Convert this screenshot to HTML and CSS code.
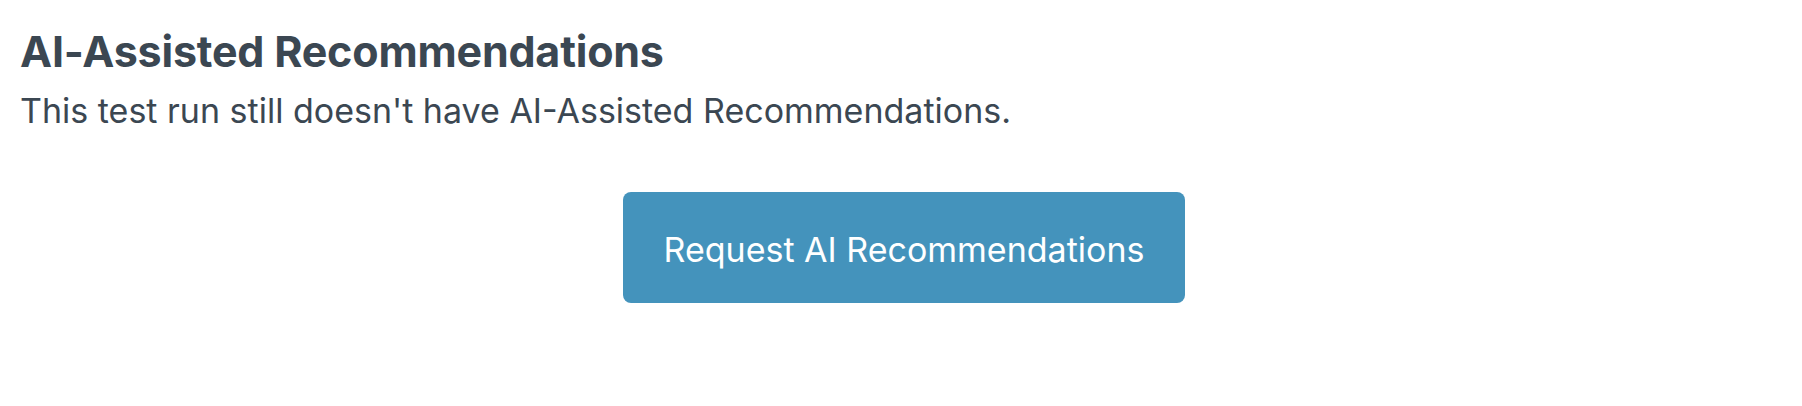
FILE: index.html
```html
<!DOCTYPE html>
<html lang="en">
<head>
<meta charset="utf-8">
<title>AI-Assisted Recommendations</title>
<link rel="stylesheet" href="styles.css">
</head>
<body>
<section class="panel">
  <h2 class="panel-title">AI-Assisted Recommendations</h2>
  <p class="panel-text">This test run still doesn't have AI-Assisted Recommendations.</p>
  <div class="actions">
    <button class="btn-request" type="button">Request AI Recommendations</button>
  </div>
</section>
</body>
</html>
```

FILE: styles.css
```css
html, body {
  margin: 0;
  padding: 0;
  background: #ffffff;
}

body {
  font-family: Inter, "Noto Sans", "Liberation Sans", sans-serif;
  color: #3b4752;
}

.panel {
  padding: 25px 20px 0 20px;
}

.panel-title {
  margin: 0;
  font-size: 43px;
  line-height: 52px;
  font-weight: 700;
  letter-spacing: -0.2px;
}

.panel-text {
  margin: 13px 0 0 0;
  font-size: 34px;
  line-height: 42px;
  font-weight: 400;
}

.actions {
  display: flex;
  justify-content: center;
  margin-top: 60px;
  padding-left: 6px;
}

.btn-request {
  font-family: inherit;
  font-size: 34px;
  line-height: 42px;
  color: #ffffff;
  background: #4493bc;
  border: none;
  border-radius: 8px;
  padding: 37px 41px 32px 41px;
  cursor: pointer;
}
```
